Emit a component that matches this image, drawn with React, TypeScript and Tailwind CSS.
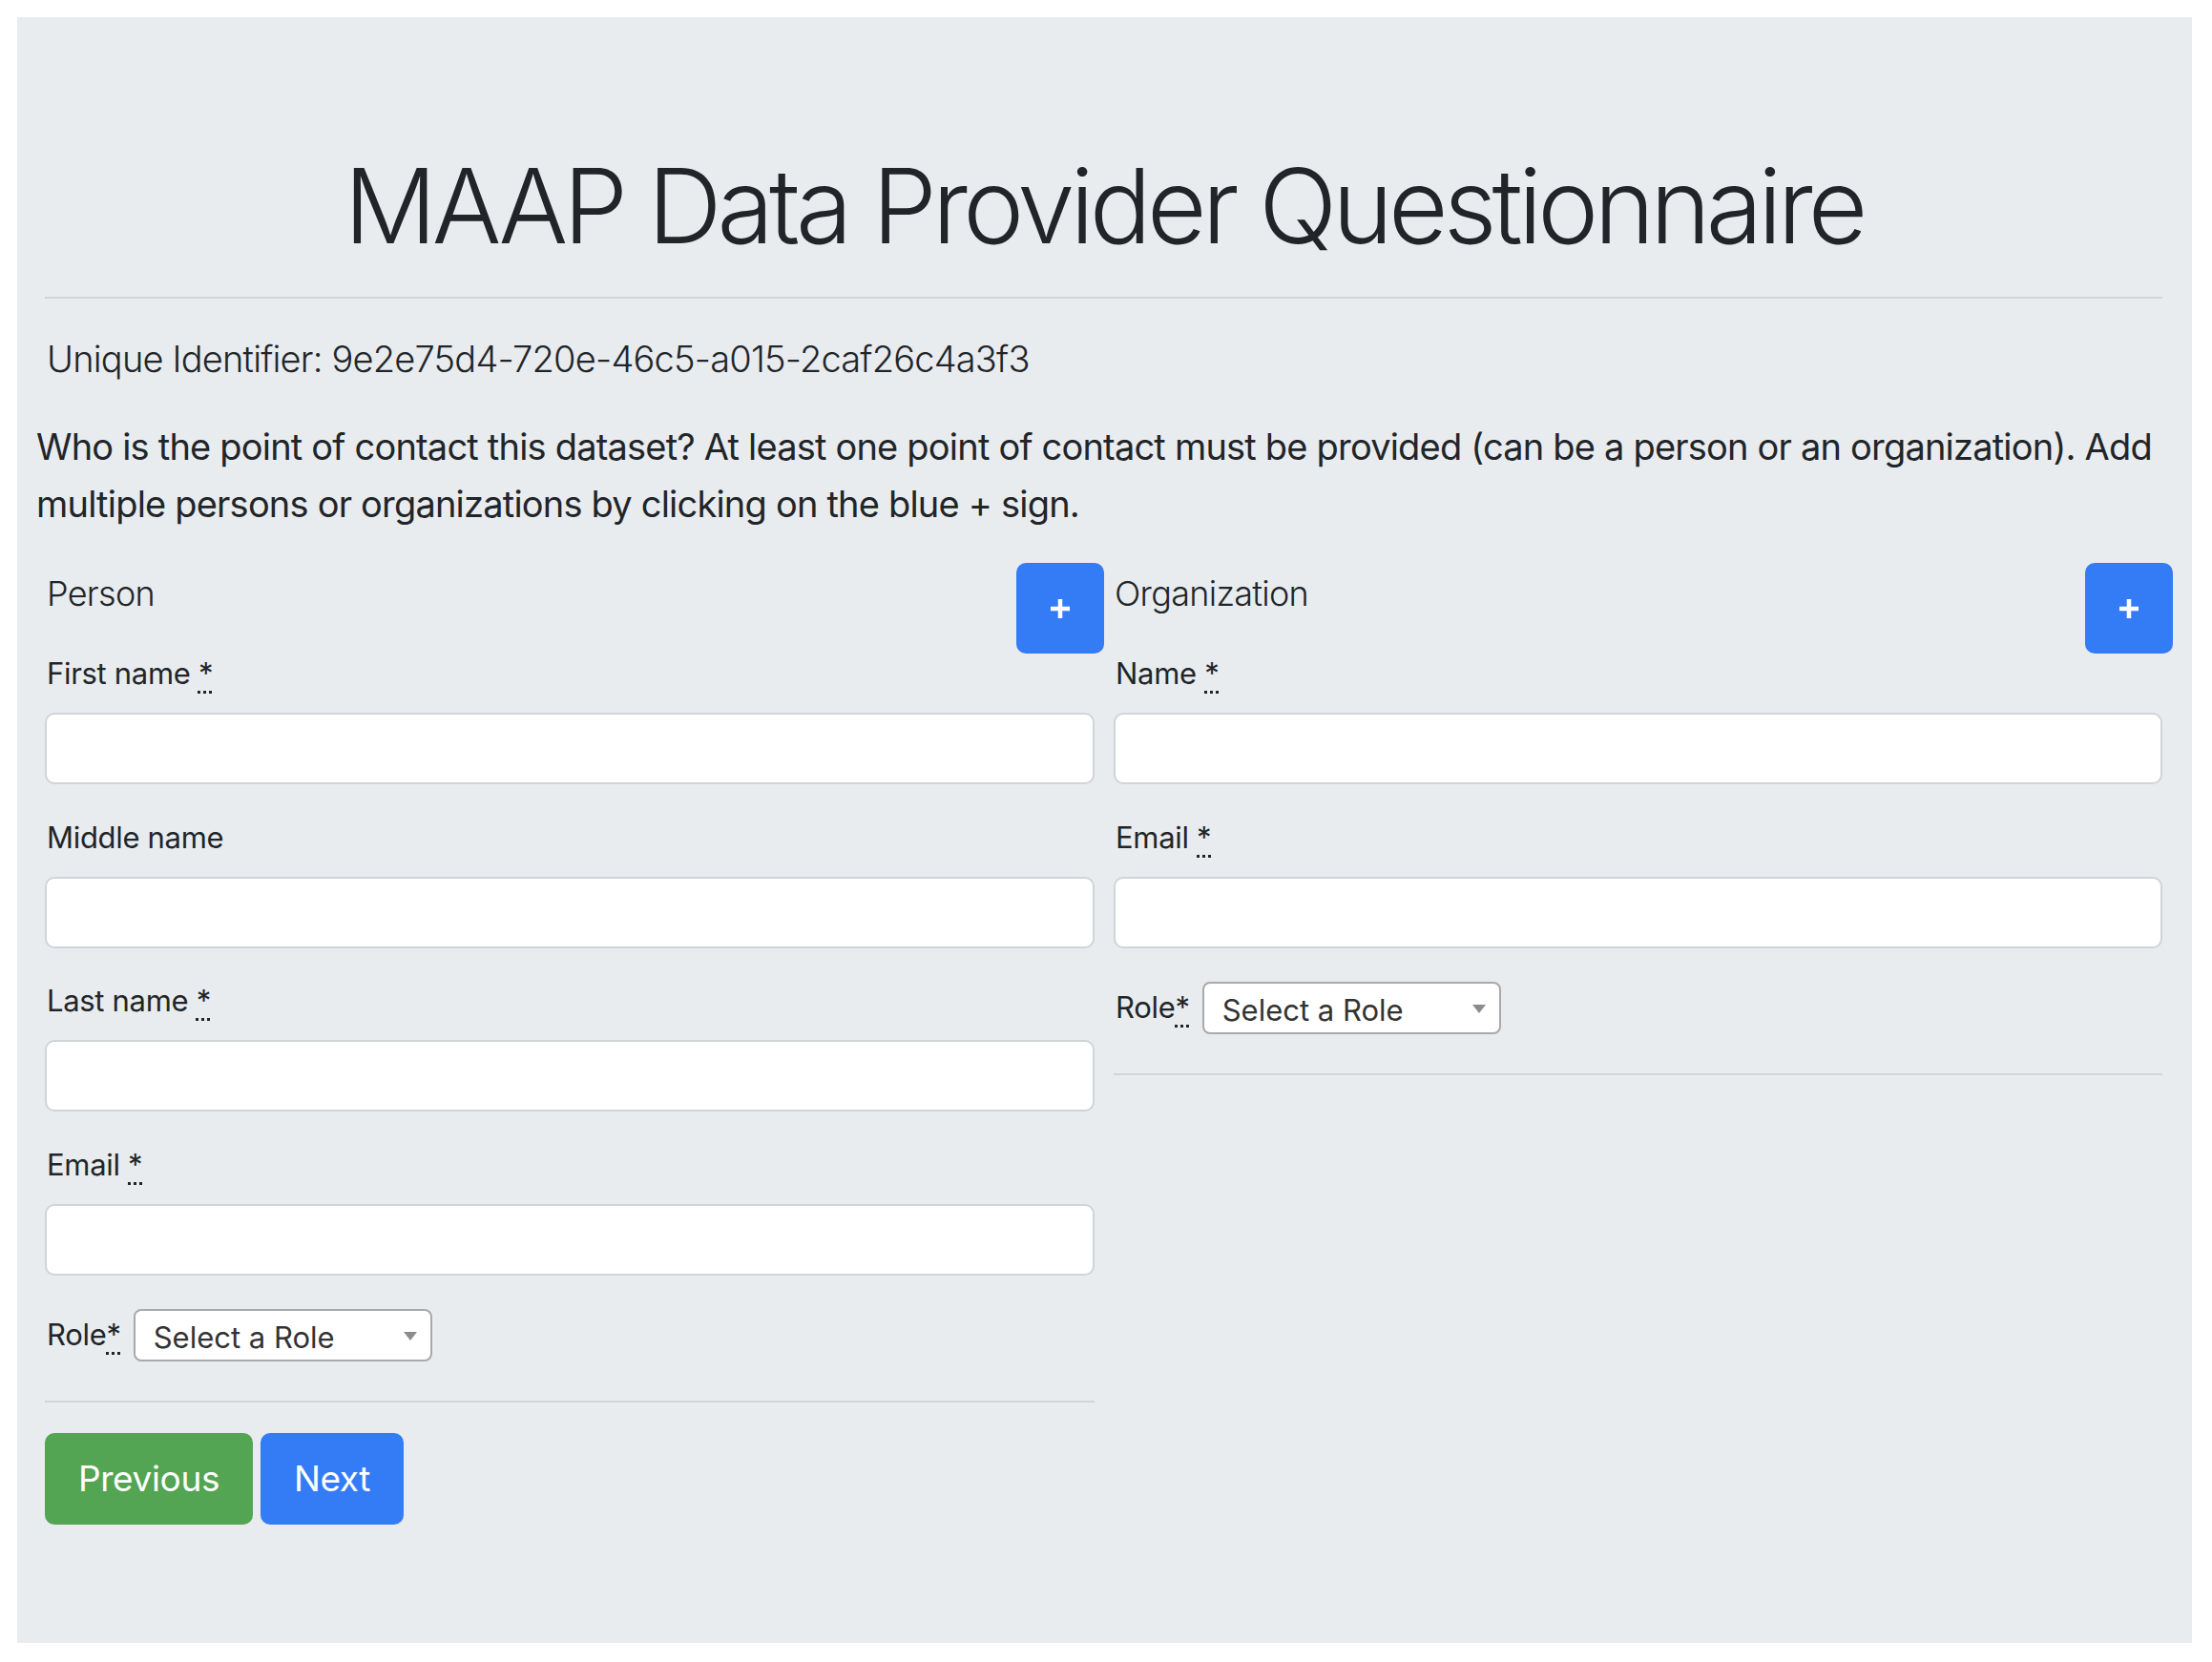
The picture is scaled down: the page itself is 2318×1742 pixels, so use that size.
import React from "react";

const font = { fontFamily: "Inter, 'Noto Sans', sans-serif" };

function Req() {
  return (
    <abbr title="required" className="no-underline">
      <span className="underline decoration-dotted decoration-[3px] underline-offset-[7px]">*</span>
    </abbr>
  );
}

function Field({ label, required }: { label: string; required?: boolean }) {
  return (
    <div className="flex flex-col">
      <label className="pl-[2px] text-[31px] leading-[48px] tracking-[-0.01em] text-[#212529]">
        {label}
        {required && (
          <>
            {" "}
            <Req />
          </>
        )}
      </label>
      <input
        type="text"
        className="mt-[17px] h-[75px] w-full rounded-[10px] border-2 border-[#ced4da] bg-white px-4 text-[32px] outline-none"
      />
    </div>
  );
}

function RoleSelect() {
  return (
    <div className="flex items-center gap-[13px]">
      <span className="pl-[2px] text-[31px] leading-[48px] tracking-[-0.01em] text-[#212529]">
        Role<Req />
      </span>
      <div className="relative flex h-[55px] w-[313px] items-center rounded-[8px] border-2 border-[#a9a9a9] bg-white pl-[19px]">
        <span className="pt-[4px] text-[31px] leading-none text-[#333]">Select a Role</span>
        <svg className="absolute right-[14px] top-[22px]" width="14" height="9" viewBox="0 0 14 9">
          <path d="M0 0 H14 L7 9 Z" fill="#8c8c8c" />
        </svg>
      </div>
    </div>
  );
}

function PlusButton() {
  return (
    <button className="flex h-[95px] w-[92px] items-center justify-center rounded-[10px] bg-[#347cf6] text-white">
      <svg width="22" height="22" viewBox="0 0 22 22">
        <path d="M11 1 V21 M1 11 H21" stroke="white" strokeWidth="4.5" />
      </svg>
    </button>
  );
}

export default function App() {
  return (
    <div className="min-h-[1742px] bg-white pt-[18px]" style={font}>
      <div className="ml-[18px] h-[1704px] w-[2279px] bg-[#e9ecef] pl-[29px] pr-[20px] text-[#212529]">
        {/* title */}
        <h1 className="pr-[11px] pt-[129px] text-center text-[108px] font-light leading-[138px] tracking-[-0.045em]">
          MAAP Data Provider Questionnaire
        </h1>
        <div className="mr-[11px] mt-[26px] h-[2px] bg-[#d2d5d8]" />

        <p className="mt-[33px] pl-[2px] text-[38px] font-light leading-[60px] tracking-[-0.021em]">
          Unique Identifier: 9e2e75d4-720e-46c5-a015-2caf26c4a3f3
        </p>

        <p className="-ml-[9px] mt-[32px] whitespace-nowrap text-[38px] leading-[60px] tracking-[-0.021em]">
          Who is the point of contact this dataset? At least one point of contact must be provided (can be a person or an organization). Add
          <br />
          multiple persons or organizations by clicking on the blue + sign.
        </p>

        <div className="mt-[32px] grid grid-cols-2 gap-x-[10px]">
          {/* Person */}
          <div className="flex flex-col">
            <div className="flex items-start justify-between">
              <h4 className="pl-[2px] pt-[2px] text-[36px] font-light leading-[60px] tracking-[-0.02em]">Person</h4>
              <PlusButton />
            </div>
            <div className="-mt-[3px] flex flex-col gap-[31.5px] pr-[10px]">
              <Field label="First name" required />
              <Field label="Middle name" />
              <Field label="Last name" required />
              <Field label="Email" required />
            </div>
            <div className="mt-[35px]">
              <RoleSelect />
            </div>
            <div className="mr-[10px] mt-[41px] h-[2px] bg-[#d2d5d8]" />
            <div className="mt-[32px] flex gap-[8px]">
              <button className="h-[96px] w-[218px] rounded-[10px] bg-[#53a553] text-[37px] tracking-[-0.01em] text-white">
                Previous
              </button>
              <button className="h-[96px] w-[150px] rounded-[10px] bg-[#347cf6] text-[37px] tracking-[-0.01em] text-white">
                Next
              </button>
            </div>
          </div>

          {/* Organization */}
          <div className="flex flex-col">
            <div className="flex items-start justify-between">
              <h4 className="pl-[1px] pt-[2px] text-[36px] font-light leading-[60px] tracking-[-0.02em]">Organization</h4>
              <PlusButton />
            </div>
            <div className="-mt-[3px] flex flex-col gap-[31.5px] pr-[11px]">
              <Field label="Name" required />
              <Field label="Email" required />
            </div>
            <div className="mt-[35px]">
              <RoleSelect />
            </div>
            <div className="mr-[11px] mt-[41px] h-[2px] bg-[#d2d5d8]" />
          </div>
        </div>
      </div>
    </div>
  );
}
